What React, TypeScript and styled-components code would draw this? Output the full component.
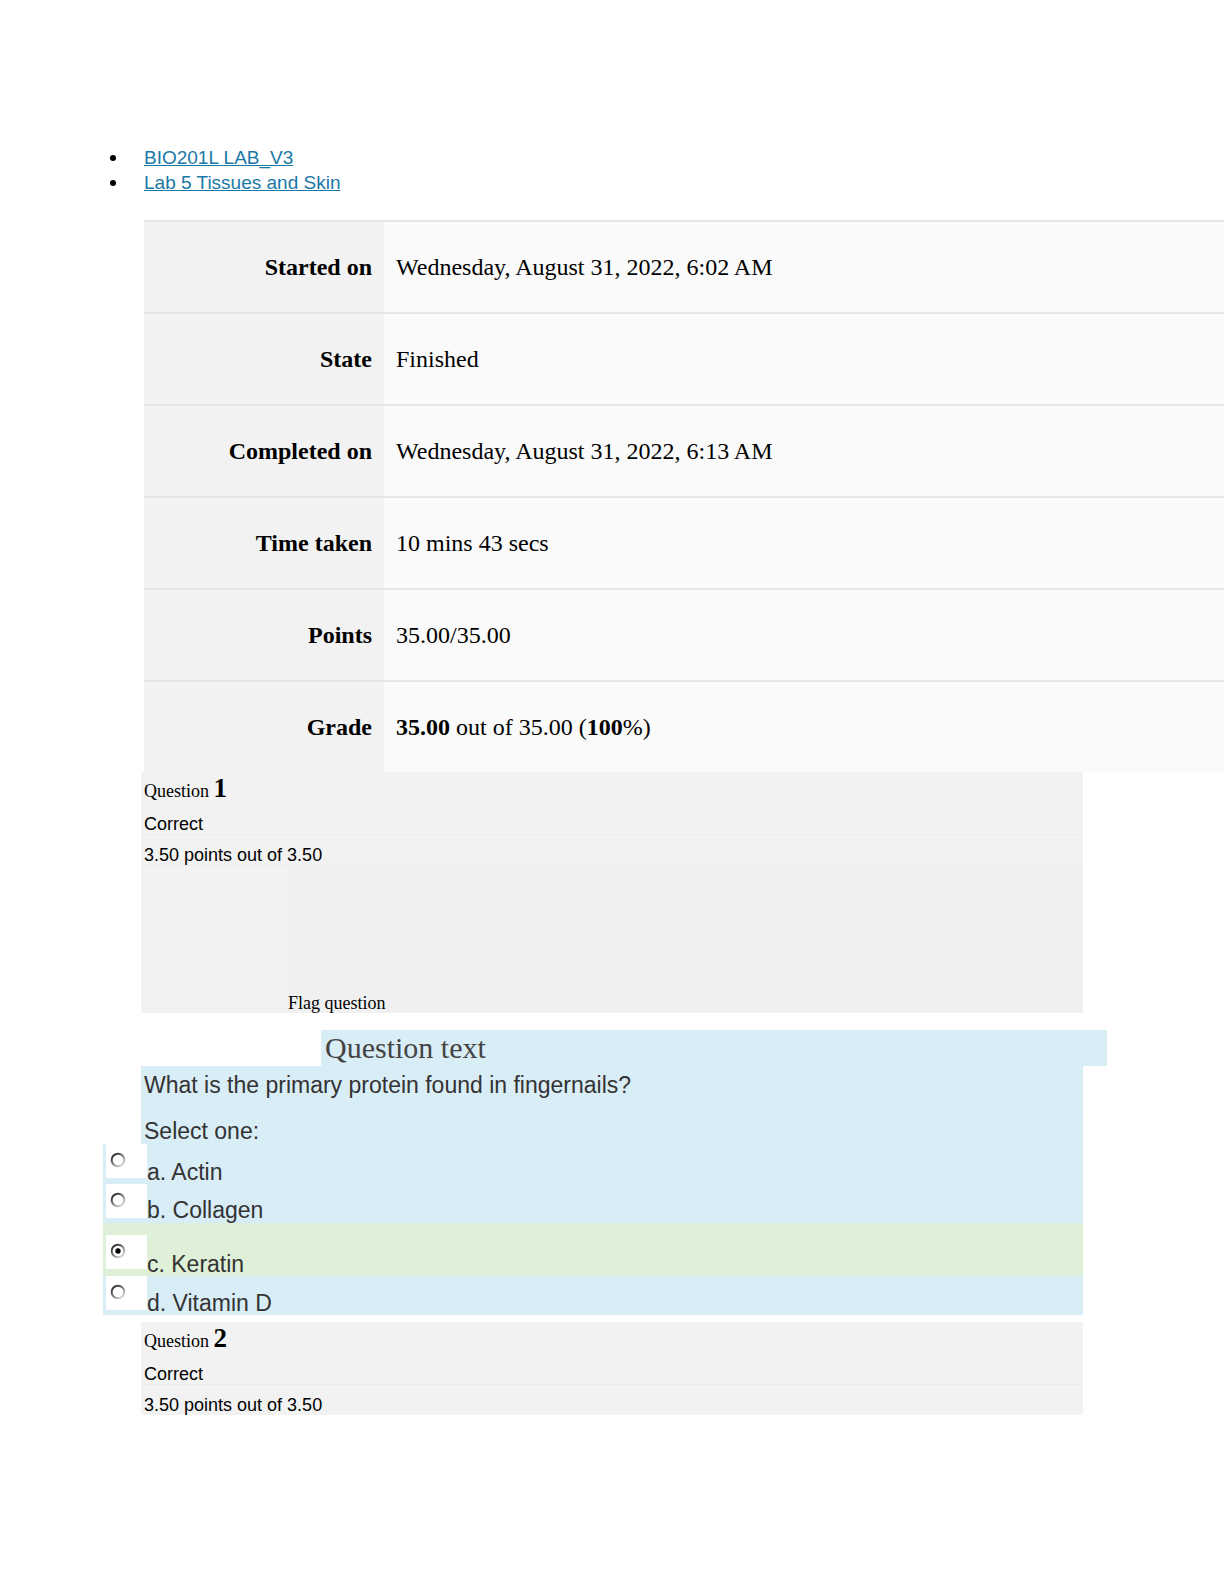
import React, { useId } from 'react';
import styled, { createGlobalStyle } from 'styled-components';

const GlobalStyle = createGlobalStyle`
  html, body {
    margin: 0;
    padding: 0;
    background: #ffffff;
  }
  body {
    font-family: "Liberation Serif", "Times New Roman", serif;
    color: #000;
  }
`;

const Page = styled.div`
  width: 1224px;
  min-height: 1584px;
  overflow: hidden;
`;

/* breadcrumb */
const Crumbs = styled.ul`
  list-style: none;
  margin: 146px 0 0 104px;
  padding: 0;
  font-family: "Liberation Sans", Arial, sans-serif;
  font-size: 19px;
  line-height: 24.5px;
`;

const Crumb = styled.li`
  display: flex;
  align-items: center;
`;

const Dot = styled.span`
  width: 6px;
  height: 6px;
  border-radius: 50%;
  background: #000;
  margin: 0 28px 0 6px;
  flex-shrink: 0;
`;

const CrumbLink = styled.a`
  color: #1a78a6;
  text-decoration: underline;
`;

/* summary table */
const Summary = styled.div`
  display: grid;
  grid-template-columns: 240px 1fr;
  margin: 25px 0 0 144px;
  width: 1080px;
  font-family: "Liberation Serif", "Times New Roman", serif;
  font-size: 24px;
`;

const Cell = styled.div`
  height: 90px;
  border-top: 2px solid #e6e6e6;
  display: flex;
  align-items: center;
`;

const Label = styled(Cell)`
  justify-content: flex-end;
  padding-right: 12px;
  font-weight: bold;
  background: #f2f2f2;
`;

const Value = styled(Cell)`
  padding-left: 12px;
  background: #fafafa;
`;

/* question info box */
const InfoBox = styled.div`
  margin-left: 141px;
  width: 942px;
  background: #f2f2f2;
`;

const QTitle = styled.div`
  height: 32px;
  line-height: 33px;
  padding-left: 3px;
  font-family: "Liberation Serif", "Times New Roman", serif;
  font-size: 18px;
`;

const QNumber = styled.span`
  font-size: 27px;
  font-weight: bold;
`;

const InfoLine = styled.div<{ $h: number }>`
  height: ${({ $h }) => $h - 10}px;
  padding: 10px 0 0 3px;
  line-height: 20px;
  font-family: "Liberation Sans", Arial, sans-serif;
  font-size: 18px;
  border-bottom: 1px solid #ececec;
  &:last-child {
    border-bottom: none;
  }
`;

const FlagArea = styled.div`
  display: flex;
  height: 147px;
`;

const FlagSpacer = styled.div`
  width: 147px;
  background: #f2f2f2;
`;

const FlagBody = styled.div`
  flex: 1;
  display: flex;
  align-items: flex-end;
  background: #f0f0f0;
  font-family: "Liberation Serif", "Times New Roman", serif;
  font-size: 18px;
  line-height: 20px;
`;

/* question content */
const QTextHeading = styled.h4`
  margin: 17px 0 0 321px;
  width: 782px;
  height: 36px;
  padding-left: 4px;
  background: #d9edf7;
  font-family: "Liberation Serif", "Times New Roman", serif;
  font-weight: normal;
  font-size: 30px;
  line-height: 36px;
  color: #444;
`;

const Formulation = styled.div`
  margin-left: 141px;
  width: 942px;
  background: #d9edf7;
  font-family: "Liberation Sans", Arial, sans-serif;
  font-size: 23px;
  color: #333;
`;

const QText = styled.div`
  height: 41px;
  padding: 6px 0 0 3px;
  line-height: 26px;
  border-bottom: 1px solid #d4e9f3;
`;

const Prompt = styled.div`
  height: 26px;
  padding: 4px 0 0 3px;
  line-height: 26px;
`;

const Answers = styled.div`
  margin-left: 103px;
  width: 980px;
  font-family: "Liberation Sans", Arial, sans-serif;
  font-size: 23px;
  color: #333;
`;

const Option = styled.div<{ $h: number; $correct?: boolean }>`
  display: flex;
  align-items: flex-start;
  height: ${({ $h }) => $h}px;
  padding-left: 3px;
  background: ${({ $correct }) => ($correct ? '#dff0d8' : '#d9edf7')};
`;

const RadioCell = styled.div<{ $top: number }>`
  width: 41px;
  height: 34px;
  margin-top: ${({ $top }) => $top}px;
  background: #ffffff;
  flex-shrink: 0;
  svg {
    display: block;
    margin: 8px 0 0 4px;
  }
`;

const OptionLabel = styled.div<{ $top: number }>`
  padding-top: ${({ $top }) => $top}px;
  line-height: 26px;
`;

const Gap = styled.div`
  height: 7px;
`;

const Radio: React.FC<{ checked?: boolean }> = ({ checked }) => {
  const id = useId();
  return (
    <svg width="16" height="16" viewBox="0 0 16 16">
      <defs>
        <linearGradient id={id} x1="0.15" y1="0.1" x2="0.85" y2="0.9">
          <stop offset="0" stopColor="#333333" />
          <stop offset="0.5" stopColor="#808080" />
          <stop offset="1" stopColor="#d6d6d6" />
        </linearGradient>
      </defs>
      <circle cx="8" cy="8" r="6.3" fill="#ffffff" stroke={`url(#${id})`} strokeWidth="2" />
      {checked && <circle cx="8" cy="8" r="2.7" fill="#000" />}
    </svg>
  );
};

const summaryRows: { label: string; value: React.ReactNode }[] = [
  { label: 'Started on', value: 'Wednesday, August 31, 2022, 6:02 AM' },
  { label: 'State', value: 'Finished' },
  { label: 'Completed on', value: 'Wednesday, August 31, 2022, 6:13 AM' },
  { label: 'Time taken', value: '10 mins 43 secs' },
  { label: 'Points', value: '35.00/35.00' },
  {
    label: 'Grade',
    value: (
      <span>
        <b>35.00</b> out of 35.00 (<b>100</b>%)
      </span>
    ),
  },
];

const options = [
  { text: 'a. Actin', h: 39, box: 0, label: 15 },
  { text: 'b. Collagen', h: 40, box: 1, label: 14 },
  { text: 'c. Keratin', h: 53, box: 12, label: 28, checked: true },
  { text: 'd. Vitamin D', h: 39, box: 0, label: 14 },
];

const QuestionInfo: React.FC<{ num: number }> = ({ num }) => (
  <>
    <QTitle>
      Question <QNumber>{num}</QNumber>
    </QTitle>
    <InfoLine $h={30}>Correct</InfoLine>
    <InfoLine $h={30}>3.50 points out of 3.50</InfoLine>
  </>
);

const App: React.FC = () => {
  return (
    <Page>
      <GlobalStyle />
      <Crumbs>
        <Crumb>
          <Dot />
          <CrumbLink href="#">BIO201L LAB_V3</CrumbLink>
        </Crumb>
        <Crumb>
          <Dot />
          <CrumbLink href="#">Lab 5 Tissues and Skin</CrumbLink>
        </Crumb>
      </Crumbs>

      <Summary>
        {summaryRows.map(row => (
          <React.Fragment key={row.label}>
            <Label>{row.label}</Label>
            <Value>{row.value}</Value>
          </React.Fragment>
        ))}
      </Summary>

      <InfoBox>
        <QuestionInfo num={1} />
        <FlagArea>
          <FlagSpacer />
          <FlagBody>Flag question</FlagBody>
        </FlagArea>
      </InfoBox>

      <QTextHeading>Question text</QTextHeading>
      <Formulation>
        <QText>What is the primary protein found in fingernails?</QText>
        <Prompt>Select one:</Prompt>
      </Formulation>
      <Answers>
        {options.map(opt => (
          <Option key={opt.text} $h={opt.h} $correct={opt.checked}>
            <RadioCell $top={opt.box}>
              <Radio checked={opt.checked} />
            </RadioCell>
            <OptionLabel $top={opt.label}>{opt.text}</OptionLabel>
          </Option>
        ))}
      </Answers>

      <Gap />
      <InfoBox>
        <QuestionInfo num={2} />
      </InfoBox>
    </Page>
  );
};

export default App;
